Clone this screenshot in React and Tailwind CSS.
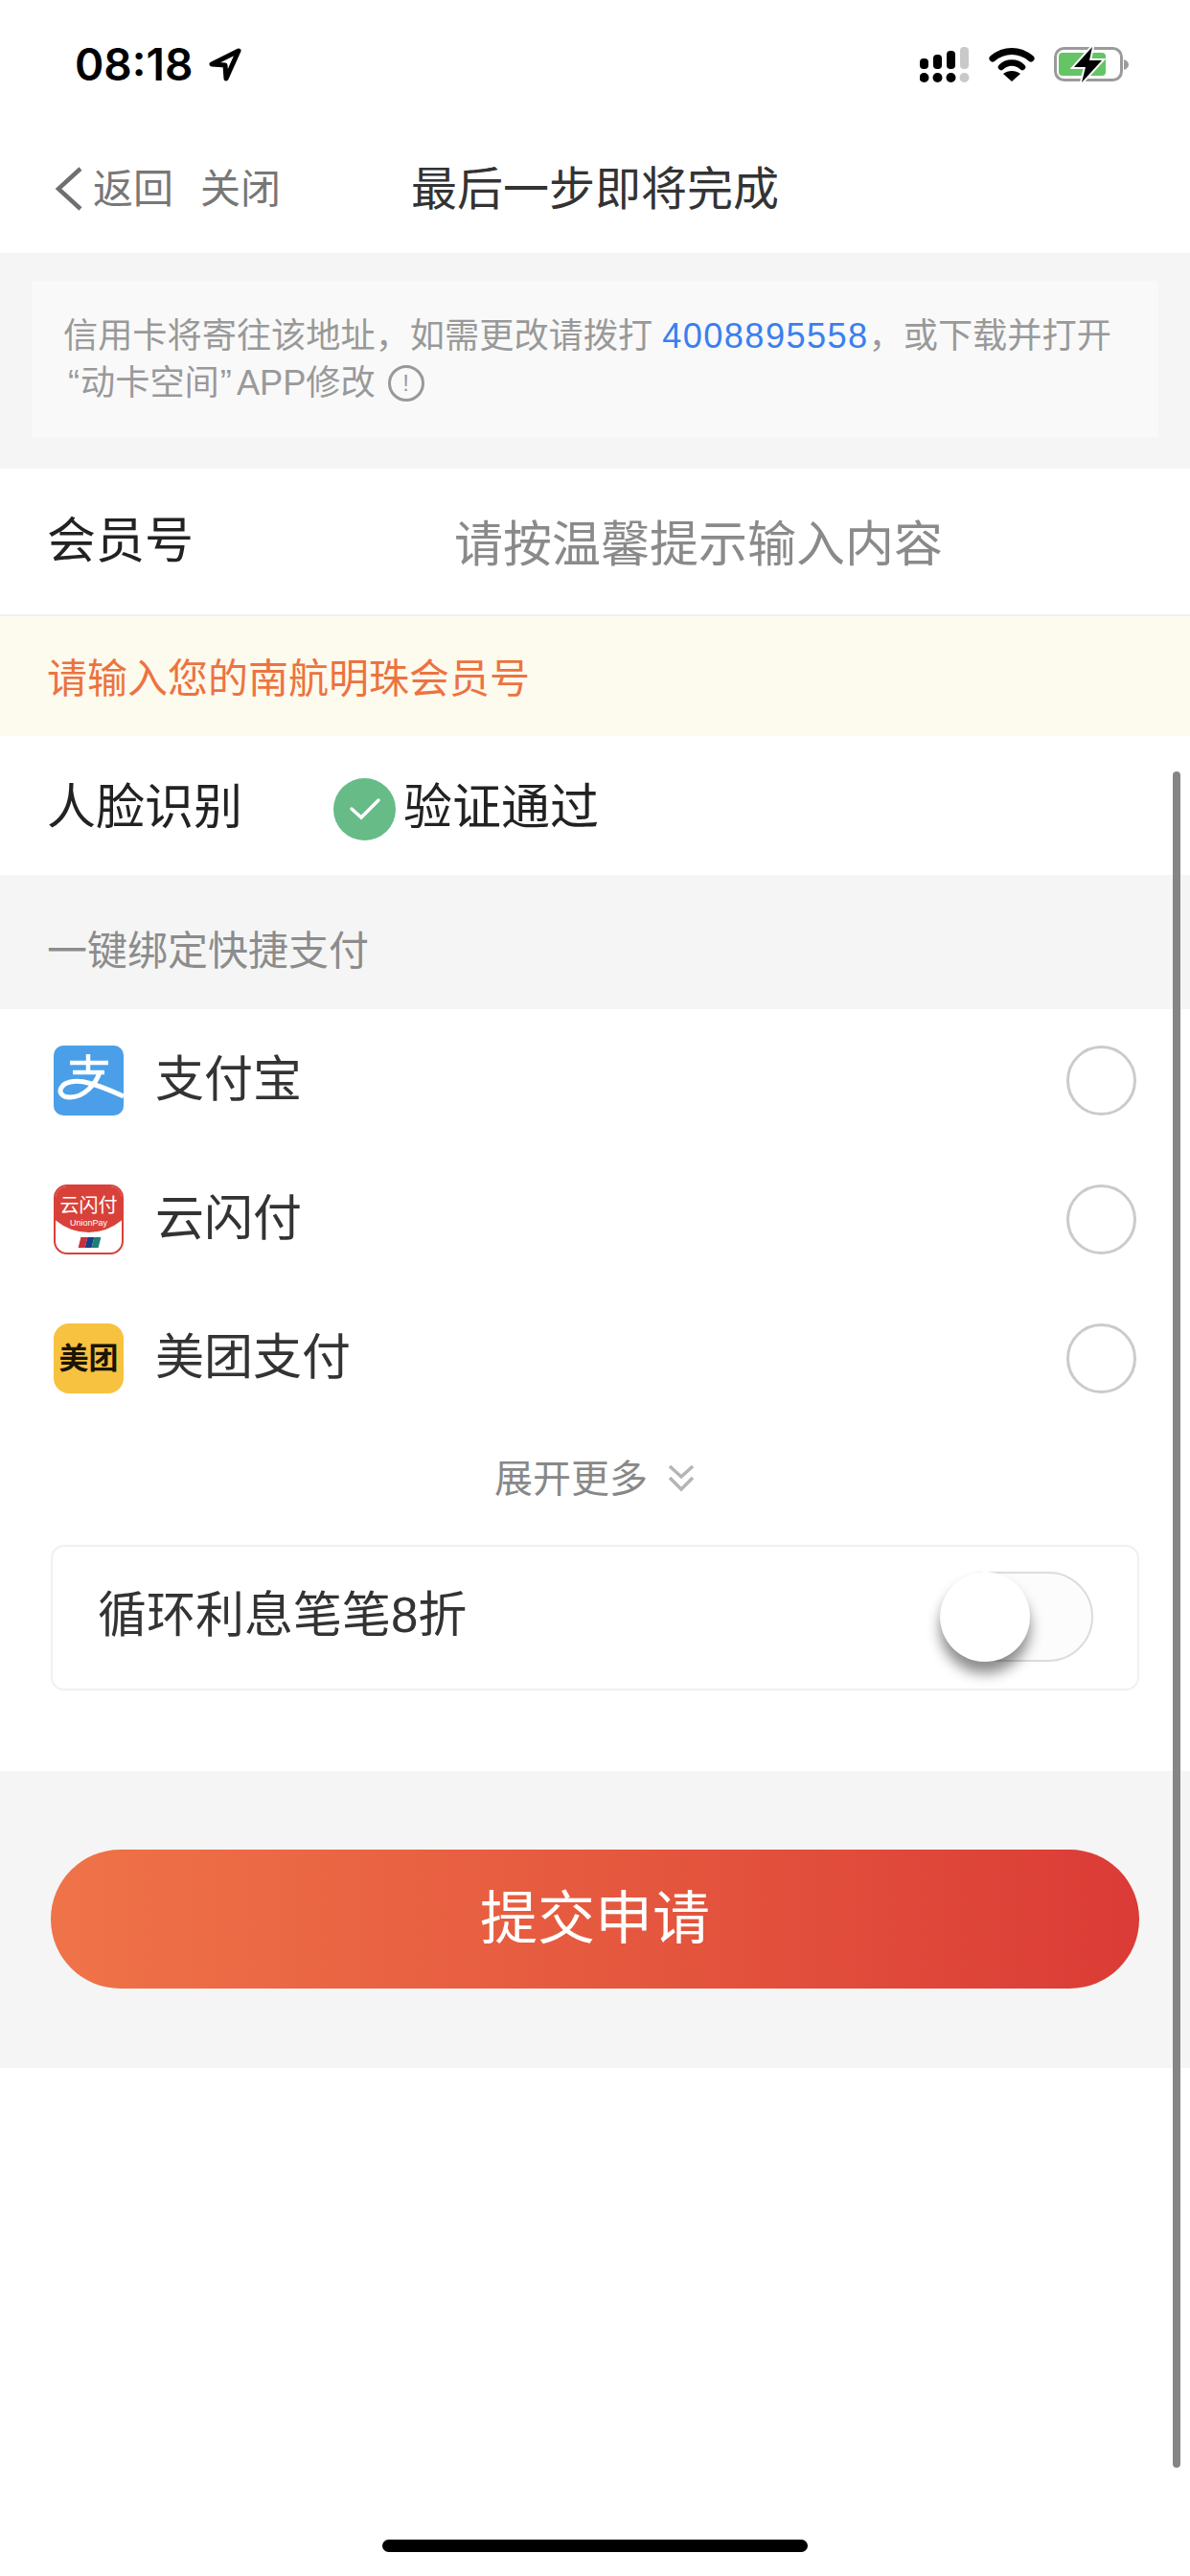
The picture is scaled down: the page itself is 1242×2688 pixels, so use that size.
import React from "react";

const payItems = [
  { name: "支付宝", icon: <AlipayIcon /> },
  { name: "云闪付", icon: <UnionPayIcon /> },
  { name: "美团支付", icon: <MeituanIcon /> },
];

function SignalIcon() {
  return (
    <svg width="52" height="38" viewBox="0 0 52 38">
      <rect x="0" y="12" width="9" height="11" rx="4" fill="#000" />
      <rect x="14" y="8" width="9" height="15" rx="4" fill="#000" />
      <rect x="28" y="4" width="9" height="19" rx="4" fill="#000" />
      <rect x="42" y="0" width="9" height="23" rx="4" fill="#c9c9c9" />
      <circle cx="4.5" cy="32" r="5" fill="#000" />
      <circle cx="18.5" cy="32" r="5" fill="#000" />
      <circle cx="32.5" cy="32" r="5" fill="#000" />
      <circle cx="46.5" cy="32" r="5" fill="#c9c9c9" />
    </svg>
  );
}

function WifiIcon() {
  return (
    <svg width="48" height="36" viewBox="0 0 48 36">
      <path d="M4 12 C16 2 32 2 44 12" fill="none" stroke="#000" strokeWidth="7" strokeLinecap="round" />
      <path d="M13 21 C19 15 29 15 35 21" fill="none" stroke="#000" strokeWidth="6.5" strokeLinecap="round" />
      <path d="M24 36 L15 28 C20 24 28 24 33 28 Z" fill="#000" />
    </svg>
  );
}

function BatteryIcon() {
  return (
    <svg width="80" height="40" viewBox="0 0 80 40">
      <rect x="1.5" y="1.5" width="69" height="33" rx="9" fill="#fff" stroke="#9b9b9b" strokeWidth="3" />
      <rect x="5" y="6" width="49" height="24" rx="4" fill="#65c466" />
      <path d="M73 13 C76 14 78 16 78 18.5 C78 21 76 23 73 24 Z" fill="#9b9b9b" />
      <path d="M40 0 L21 21 L33 21 L29 37 L50 14 L37 14 Z" fill="#000" stroke="#fff" strokeWidth="4" paintOrder="stroke" />
    </svg>
  );
}

function AlipayIcon() {
  return (
    <svg width="73" height="73" viewBox="0 0 73 73" className="block">
      <rect width="73" height="73" rx="10" fill="#4a9fe8" />
      <g fill="none" stroke="#fff" strokeWidth="4.5">
        <path d="M17 18 H57" />
        <path d="M20 28 H53" />
        <path d="M36 9 V28" />
        <path d="M48 28 C44 40 32 54 17 54 C9 54 5 49 8 44 C11 38 22 36 32 38 C46 41 60 47 73 53" strokeWidth="5" />
      </g>
    </svg>
  );
}

function UnionPayIcon() {
  return (
    <div className="relative w-[73px] h-[73px] rounded-[14px] border-2 border-[#d8413a] bg-white overflow-hidden">
      <div className="absolute left-[-12px] right-[-12px] top-[-30px] h-[78px] rounded-b-[50%] bg-[#d8413a]" />
      <div className="relative flex flex-col items-center pt-[10px] text-white leading-none">
        <span className="text-[20px]">云闪付</span>
        <span className="text-[9px] mt-[4px]">UnionPay</span>
      </div>
      <div className="absolute left-[25px] bottom-[5px] flex h-[11px] skew-x-[-14deg]">
        <span className="w-[7px] bg-[#c8303a]" />
        <span className="w-[7px] bg-[#1c3f86]" />
        <span className="w-[7px] bg-[#1e7f78]" />
      </div>
    </div>
  );
}

function MeituanIcon() {
  return (
    <div className="w-[73px] h-[73px] rounded-[16px] bg-[#f7c23f] flex items-center justify-center">
      <span className="text-[31px] font-bold leading-none text-[#1c1404]">美团</span>
    </div>
  );
}

function Radio() {
  return <div className="w-[73px] h-[73px] rounded-full border-[3px] border-[#cbcbcb]" />;
}

export default function App() {
  return (
    <div className="relative h-[2688px] overflow-hidden bg-white font-['Liberation_Sans','Noto_Sans_CJK_SC',sans-serif] font-normal">
      {/* status bar */}
      <div className="h-[130px] flex items-start justify-between pl-[78px] pr-[62px] pt-[44px]">
        <div className="flex items-center gap-[15px]">
          <span className="font-['Inter',sans-serif] text-[46px] leading-[46px] font-semibold text-black">08:18</span>
          <svg width="38" height="40" viewBox="0 0 38 40">
            <path d="M33 6 L5 20 L19 21 L20 35 Z" fill="none" stroke="#000" strokeWidth="5" strokeLinejoin="round" />
          </svg>
        </div>
        <div className="flex items-start gap-[20px] pt-[5px]">
          <SignalIcon />
          <WifiIcon />
          <BatteryIcon />
        </div>
      </div>

      {/* nav */}
      <div className="h-[134px] grid grid-cols-[1fr_auto_1fr] items-center">
        <div className="flex items-center pl-[56px]">
          <svg width="32" height="48" viewBox="0 0 32 48">
            <path d="M28 3 L5 24 L28 45" fill="none" stroke="#6f6f6f" strokeWidth="4.5" />
          </svg>
          <span className="ml-[9px] text-[42px] text-[#777]">返回</span>
          <span className="ml-[28px] text-[42px] text-[#777]">关闭</span>
        </div>
        <div className="pt-[2px] text-[48px] text-[#333]">最后一步即将完成</div>
        <div />
      </div>

      {/* notice */}
      <div className="bg-[#f5f5f5] h-[225px] px-[33px] pt-[29px]">
        <div className="bg-[#f9f9f9] h-[163px] pl-[33px] pt-[33px] text-[36.2px] leading-[49px] text-[#999]">
          <p className="whitespace-nowrap">
            信用卡将寄往该地址，如需更改请拨打 <span className="text-[#3b7ff0] tracking-[1.4px]">4008895558</span>，或下载并打开
          </p>
          <p className="flex items-center whitespace-nowrap">
            <span className="pl-[5px] pr-[1px]">“</span>动卡空间<span className="pl-[1px] pr-[5px]">”</span>APP修改
            <span className="ml-[13px] w-[38px] h-[38px] rounded-full border-[3px] border-[#999] flex items-center justify-center text-[24px] leading-none">!</span>
          </p>
        </div>
      </div>

      {/* member no */}
      <div className="h-[154px] flex items-center pl-[49px] border-b-2 border-[#f0f0f0]">
        <span className="w-[425px] text-[51px] text-[#222]">会员号</span>
        <span className="pt-[8px] text-[51px] text-[#8a8a8a]">请按温馨提示输入内容</span>
      </div>
      <div className="h-[125px] flex items-center pl-[49px] pt-[5px] bg-[#fdfaee] text-[42px] text-[#ec7340]">
        请输入您的南航明珠会员号
      </div>

      {/* face */}
      <div className="h-[145px] flex items-center pl-[49px] text-[51px] text-[#222]">
        <span className="w-[299px] pt-[5px]">人脸识别</span>
        <span className="w-[65px] h-[65px] mt-[7px] rounded-full bg-[#66bb87] flex items-center justify-center">
          <svg width="34" height="26" viewBox="0 0 34 26">
            <path d="M3 13 L13 22 L31 4" fill="none" stroke="#fff" strokeWidth="3.5" strokeLinecap="round" />
          </svg>
        </span>
        <span className="ml-[8px] pt-[5px]">验证通过</span>
      </div>

      {/* bind */}
      <div className="h-[140px] flex items-center pl-[49px] pt-[18px] bg-[#f5f5f5] text-[42px] text-[#8c8c8c]">一键绑定快捷支付</div>

      <div className="pt-[2px]">
        {payItems.map((item) => (
          <div key={item.name} className="h-[145px] flex items-center pl-[56px] pr-[56px]">
            {item.icon}
            <span className="ml-[33px] flex-1 text-[51px] text-[#333]">{item.name}</span>
            <Radio />
          </div>
        ))}
      </div>

      <div className="h-[52px] mt-[27px] flex items-center justify-center gap-[20px] text-[40px] text-[#888]">
        <span>展开更多</span>
        <svg width="30" height="32" viewBox="0 0 30 32">
          <path d="M3 3 L15 14 L27 3 M3 15 L15 27 L27 15" fill="none" stroke="#b5b5b5" strokeWidth="3.5" />
        </svg>
      </div>

      {/* toggle card */}
      <div className="mx-[53px] mt-[43px] h-[152px] rounded-[14px] border-2 border-[#f0f0f0] flex items-center justify-between pl-[47px] pr-[46px]">
        <span className="text-[51px] text-[#333] pb-[4px]">循环利息笔笔8折</span>
        <div className="relative w-[160px] h-[94px] rounded-full border-2 border-[#dcdcdc] bg-[#fcfcfc] -mt-[2px]">
          <div className="absolute left-[-2px] top-[-2px] w-[94px] h-[94px] rounded-full bg-white shadow-[0_12px_14px_rgba(0,0,0,0.45)]" />
        </div>
      </div>

      {/* submit */}
      <div className="mt-[84px] h-[310px] bg-[#f5f5f5] pt-[82px] px-[53px]">
        <button className="w-full h-[145px] rounded-full bg-gradient-to-r from-[#ef7348] to-[#db3b36] text-white text-[60px] flex items-center justify-center">
          提交申请
        </button>
      </div>

      {/* scrollbar overlay */}
      <div className="absolute left-[1224px] top-[805px] w-[8px] h-[1770px] rounded-full bg-[#858585]" />
      {/* home indicator */}
      <div className="absolute left-[399px] top-[2650px] w-[444px] h-[13px] rounded-full bg-black" />
    </div>
  );
}
